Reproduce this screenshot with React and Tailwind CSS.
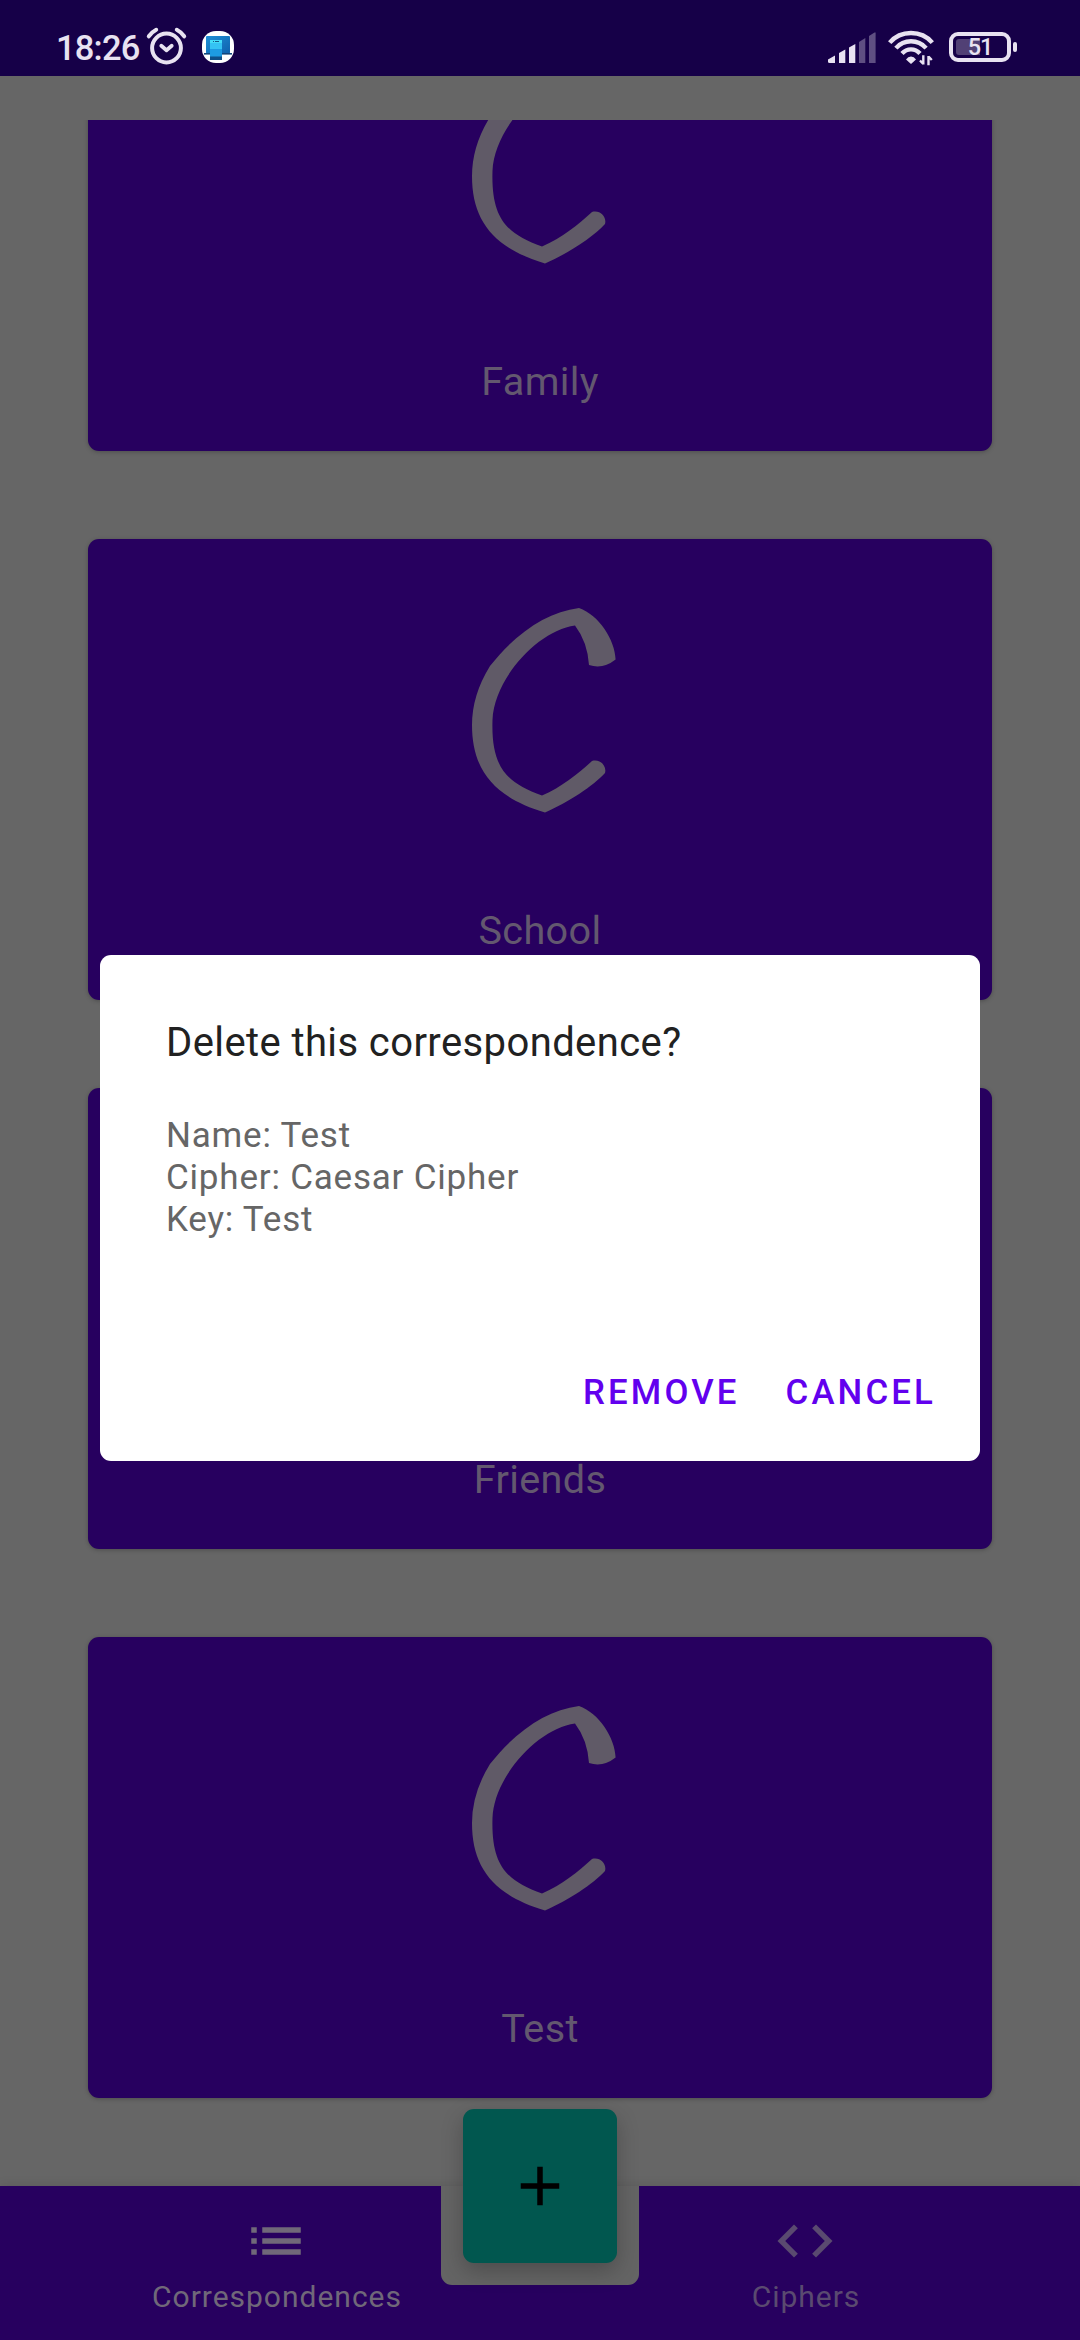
import React from "react";
import { MdAdd, MdCode, MdList } from "react-icons/md";

function AlarmIcon() {
  return (
    <svg className="h-[38px] w-[42px]" viewBox="0 0 42 38" fill="none" stroke="#e8e2f1">
      <circle cx="20.5" cy="21" r="14.4" strokeWidth="4" />
      <path d="M2.8 9.3Q6 5 10.2 2.8M38.2 9.3Q35 5 30.8 2.8" strokeWidth="4" strokeLinecap="round" />
      <path d="M15.3 18.8L20.5 23.2L25.7 18.8" strokeWidth="3.8" strokeLinecap="round" strokeLinejoin="round" />
    </svg>
  );
}

function PhoneLinkIcon() {
  return (
    <svg className="size-8" viewBox="0 0 32 32">
      <defs>
        <linearGradient id="laptop" x1="0" y1="0" x2="1" y2="1">
          <stop offset="0" stopColor="#1f8fd6" />
          <stop offset="1" stopColor="#0f62ae" />
        </linearGradient>
      </defs>
      <rect width="32" height="32" rx="14" fill="#fff" />
      <rect x="4" y="5" width="24" height="17.5" rx="1" fill="url(#laptop)" />
      <rect x="2" y="22" width="28" height="1.6" fill="#12477c" />
      <rect x="8" y="9" width="12" height="20" fill="#1d9be2" />
      <rect x="8" y="9" width="12" height="9" fill="#35c3f3" />
      <rect x="8" y="9" width="12" height="3" fill="#43dcf8" />
      <rect x="8" y="25.5" width="12" height="3.5" fill="#0e5089" />
      <path d="M11 10.5h1M13 10.5h4" stroke="#155a86" strokeWidth="1" />
    </svg>
  );
}

function SignalIcon() {
  return (
    <svg className="h-8 w-12" viewBox="0 0 48 32" fill="#e8e2f1">
      <path d="M0 27.5L7 23.5V31H1.5Q0 31 0 29.5Z" />
      <path d="M11 21L17.3 17.5V31H11Z" />
      <path d="M21 15.5L27.3 12V31H21Z" />
      <path d="M31 10L37.3 6V31H31Z" opacity=".35" />
      <path d="M41 4L46.5 0.4H47.6V31H41Z" opacity=".35" />
    </svg>
  );
}

function WifiIcon() {
  return (
    <svg className="h-9 w-[47px]" viewBox="0 0 47 36" fill="none" stroke="#e8e2f1">
      <path d="M1.7 12.6Q10 3 23 3T44.3 12.6" strokeWidth="4.4" />
      <path d="M7.9 18.1Q14 11.3 23 11.3T38.1 18.1" strokeWidth="4.4" />
      <path d="M14 23.6Q17.8 19.4 23 19.4T32 23.6" strokeWidth="4.4" />
      <path d="M18 29.5Q20 26.5 23 26.5T28 29.5L23 34Z" fill="#e8e2f1" stroke="none" />
      <path d="M35.3 25.3V34.5M40.5 35.2V26M32 30.5L35.3 34M43.8 30L40.5 26.5" strokeWidth="2.4" />
    </svg>
  );
}

function Battery() {
  return (
    <div className="flex items-center gap-[2px]">
      <div className="flex h-[30px] w-[62px] items-center rounded-[9px] border-4 border-[#e8e2f1] px-[3px]">
        <div className="flex h-4 w-[48px] items-center justify-center rounded-[3px] bg-linear-to-r from-[#514075] from-50% to-transparent to-50% pt-px text-[23.5px] leading-none font-medium tracking-[-1px] text-[#e8e2f1]">
          51
        </div>
      </div>
      <div className="h-[10px] w-1 rounded-full bg-[#e8e2f1]" />
    </div>
  );
}

function StatusBar() {
  return (
    <header className="flex h-19 shrink-0 items-start bg-[#160048] pr-[63px] pl-14 text-[#e8e2f1]">
      <span className="mt-[27px] w-[90px] text-[34.5px] leading-[42px] font-medium tracking-[-0.8px]">18:26</span>
      <div className="mt-[27px]">
        <AlarmIcon />
      </div>
      <div className="mt-[31px] ml-[14px]">
        <PhoneLinkIcon />
      </div>
      <div className="mt-8 ml-auto">
        <SignalIcon />
      </div>
      <div className="mt-[30px] ml-3">
        <WifiIcon />
      </div>
      <div className="mt-8 ml-[14px]">
        <Battery />
      </div>
    </header>
  );
}

function CipherEmblem() {
  return (
    <svg className="ml-2 h-[206px] w-[146px]" viewBox="0 0 146 206" fill="#605a67">
      <path d="M108 0C128 7 144 32 144.600 51.500Q132 61.500 118 57Q116.500 34 104 17.500C68 22 23 70 21.500 112C20 160 36 175 71 187.500C91 179 108 165 121 153C129 150.500 136 158 134 165C122 178 98 194 74 204.500C22 189 1 161 1 117Q1 87 19 58C45 25 76 4 108 0Z" />
    </svg>
  );
}

function CorrespondenceCard({ name }) {
  return (
    <article className="flex h-[461px] shrink-0 flex-col items-center rounded-[11px] bg-[#27005f] pt-[69px] shadow-[0_1px_4px_rgba(0,0,0,0.25)]">
      <CipherEmblem />
      <h2 className="mt-[94px] text-[39.6px] leading-[46px] tracking-[0.009375em] text-[#63586f]">{name}</h2>
    </article>
  );
}

function NavItem({ icon: Icon, label, className }) {
  return (
    <button className={`flex flex-1 flex-col items-center pt-[22px] ${className}`}>
      <Icon className="size-[66px]" />
      <span className="mt-[5px] ml-[3px] text-[30px] leading-[35px] tracking-[0.033em]">{label}</span>
    </button>
  );
}

function BottomBar() {
  return (
    <nav className="relative flex h-[154px] shrink-0 bg-[#27005f] px-[11px] shadow-[0_-1px_10px_rgba(0,0,0,0.1)]">
      <NavItem icon={MdList} label="Correspondences" className="text-[#706879]" />
      <NavItem icon={MdCode} label="Ciphers" className="text-[#5a4a70]" />
      <div className="absolute top-0 left-[441px] h-[99px] w-[198px] rounded-b-[11px] bg-[#646464]" />
      <button className="absolute -top-[77px] left-[463px] flex size-[154px] items-center justify-center rounded-[11px] bg-[#01574f] text-black shadow-[0_8px_22px_rgba(0,0,0,0.24)]">
        <MdAdd className="size-[66px]" />
      </button>
    </nav>
  );
}

function DeleteDialog() {
  return (
    <section
      role="dialog"
      className="absolute top-[955px] left-[100px] flex h-[506px] w-[880px] flex-col rounded-[11px] bg-white px-[66px] pt-[65px]"
    >
      <h1 className="text-[40px] leading-[46px] tracking-[0.01em] text-[#212121]">
        Delete this correspondence?
      </h1>
      <div className="mt-[49px] text-[35px] leading-[42px] tracking-[0.0226em] text-[#666666]">
        <p>Name: Test</p>
        <p>Cipher: Caesar Cipher</p>
        <p>Key: Test</p>
      </div>
      <div className="mt-[128px] -mr-[22px] flex justify-end gap-[46px] text-[34.8px] leading-[46px] font-medium tracking-[0.09em] text-[#6200ee]">
        <button>REMOVE</button>
        <button>CANCEL</button>
      </div>
    </section>
  );
}

export default function App() {
  return (
    <div className="relative flex h-[2340px] w-[1080px] flex-col overflow-hidden bg-[#666666] font-['Roboto',sans-serif]">
      <StatusBar />
      <main className="mt-11 flex min-h-0 flex-1 flex-col justify-end gap-[88px] overflow-hidden px-[88px] pb-[88px]">
        <CorrespondenceCard name="Family" />
        <CorrespondenceCard name="School" />
        <CorrespondenceCard name="Friends" />
        <CorrespondenceCard name="Test" />
      </main>
      <BottomBar />
      <DeleteDialog />
    </div>
  );
}
